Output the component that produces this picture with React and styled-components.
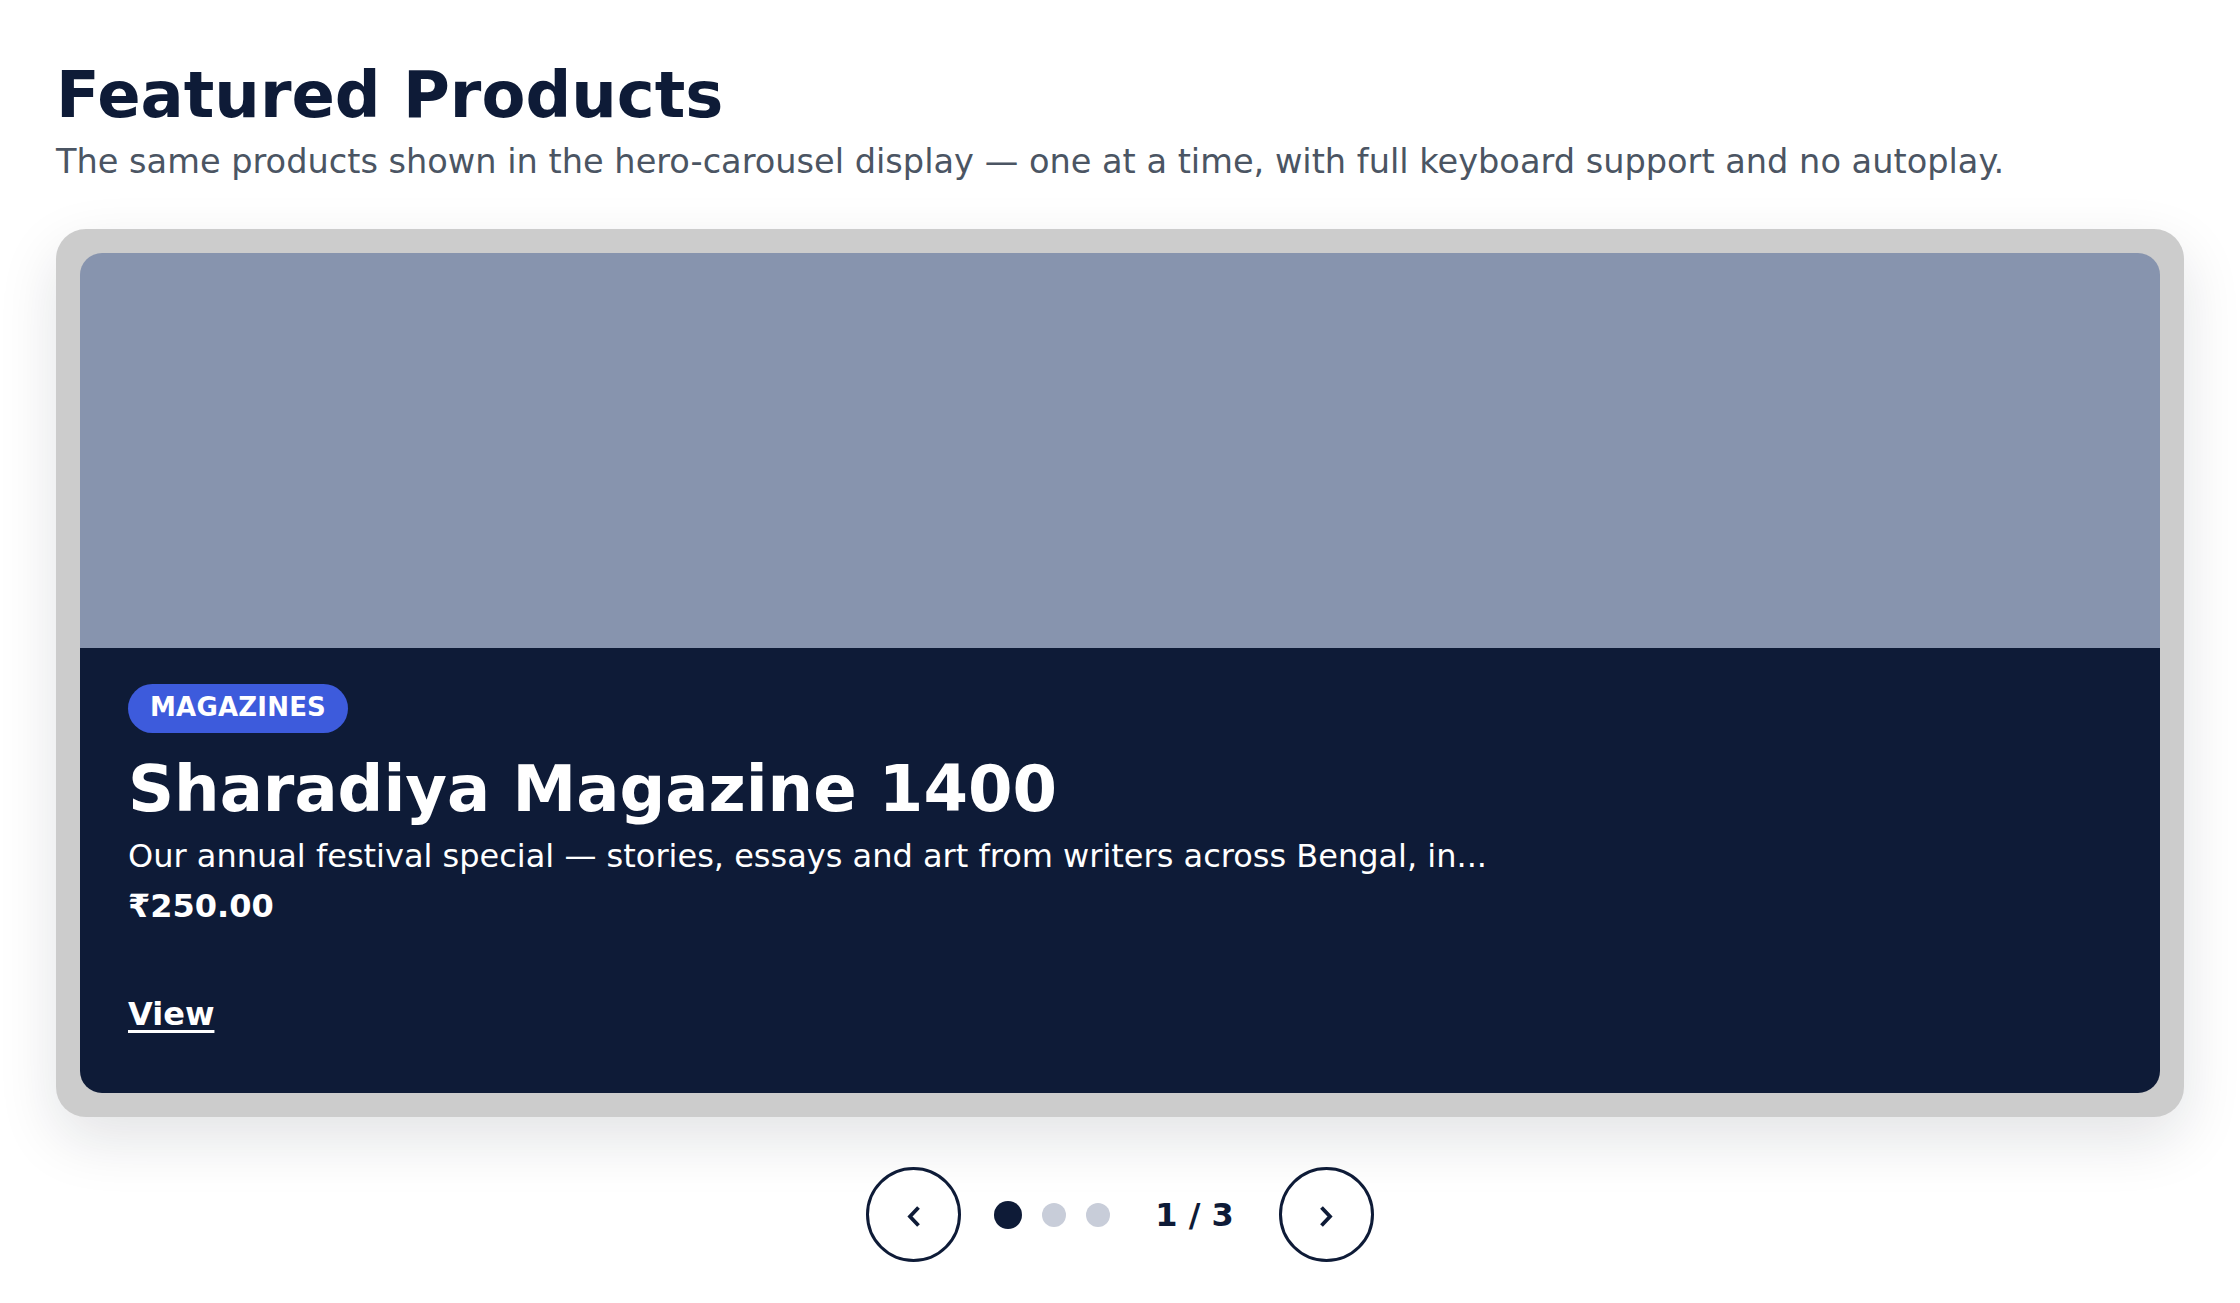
import React, { useState } from "react";
import styled, { createGlobalStyle } from "styled-components";

const GlobalStyle = createGlobalStyle`
  *, *::before, *::after { box-sizing: border-box; }
  html, body { margin: 0; padding: 0; background: #ffffff; }
  body { font-family: "DejaVu Sans", "Noto Sans", sans-serif; }
`;

const NAVY = "#0e1b37";

const Page = styled.main`
  padding: 57px 56px 40px;
  color: ${NAVY};
`;

const Heading = styled.h1`
  margin: 0;
  font-size: 64px;
  line-height: 76.8px;
  font-weight: 700;
  color: ${NAVY};
`;

const Lead = styled.p`
  margin: 3px 0 0;
  font-size: 33.6px;
  line-height: 50.4px;
  color: #4b5563;
`;

const Frame = styled.section`
  margin-top: 42px;
  padding: 24px;
  background: #cccccc;
  border-radius: 30px;
  box-shadow: 0 22px 60px rgba(15, 23, 42, 0.12);
`;

const Slide = styled.article`
  display: flex;
  flex-direction: column;
  border-radius: 22px;
  overflow: hidden;
`;

const Media = styled.div`
  height: 395px;
  background: #8794ae;
`;

const Body = styled.div`
  display: flex;
  flex-direction: column;
  align-items: flex-start;
  padding: 36px 48px 55px;
  background: ${NAVY};
  color: #ffffff;
`;

const Badge = styled.span`
  display: inline-block;
  padding: 8px 22px 11px;
  border-radius: 999px;
  background: #3d5bdc;
  color: #ffffff;
  font-size: 26px;
  line-height: 30px;
  font-weight: 700;
  letter-spacing: 0.2px;
`;

const SlideTitle = styled.h2`
  margin: 18px 0 0;
  font-size: 64px;
  line-height: 76.8px;
  font-weight: 700;
`;

const Text = styled.p`
  margin: ${(p) => p.$mt || 0}px 0 0;
  font-size: 32px;
  line-height: 48px;
  font-weight: ${(p) => (p.$bold ? 700 : 400)};
`;

const ViewLink = styled.a`
  margin-top: 60px;
  font-size: 32px;
  line-height: 48px;
  font-weight: 700;
  color: #ffffff;
  text-decoration: underline;
  text-decoration-thickness: 3px;
  text-underline-offset: 5px;
`;

const Controls = styled.nav`
  display: flex;
  justify-content: center;
  align-items: center;
  gap: 33px;
  margin-top: 50px;
`;

const NavButton = styled.button`
  display: flex;
  align-items: center;
  justify-content: center;
  width: 95px;
  height: 95px;
  padding: 0;
  border: 3px solid ${NAVY};
  border-radius: 50%;
  background: #ffffff;
  color: ${NAVY};
  cursor: pointer;

  svg { margin-top: 3px; }
`;

const Dots = styled.div`
  display: flex;
  align-items: center;
  gap: 20px;
`;

const Dot = styled.button`
  width: ${(p) => (p.$active ? 28 : 24)}px;
  height: ${(p) => (p.$active ? 28 : 24)}px;
  padding: 0;
  border: none;
  border-radius: 50%;
  background: ${(p) => (p.$active ? NAVY : "#c8cdd9")};
  cursor: pointer;
`;

const Counter = styled.span`
  margin: 0 12px;
  font-size: 32px;
  line-height: 48px;
  font-weight: 700;
  color: ${NAVY};
`;

const Chevron = ({ dir }) => (
  <svg width="14" height="21" viewBox="0 0 14 21" aria-hidden="true">
    <path
      d={dir === "left" ? "M11.5 1.5 L3 10.5 L11.5 19.5" : "M2.5 1.5 L11 10.5 L2.5 19.5"}
      fill="none"
      stroke="currentColor"
      strokeWidth="3.8"
    />
  </svg>
);

const products = [
  {
    category: "MAGAZINES",
    title: "Sharadiya Magazine 1400",
    desc: "Our annual festival special — stories, essays and art from writers across Bengal, in...",
    price: "₹250.00",
  },
  {
    category: "BOOKS",
    title: "Collected Poems",
    desc: "A new edition of classic verse.",
    price: "₹400.00",
  },
  {
    category: "PRINTS",
    title: "Festival Poster",
    desc: "Limited art print.",
    price: "₹150.00",
  },
];

export default function App() {
  const [index, setIndex] = useState(0);
  const p = products[index];
  const n = products.length;
  return (
    <>
      <GlobalStyle />
      <Page>
        <Heading>Featured Products</Heading>
        <Lead>
          The same products shown in the hero-carousel display — one at a time, with full keyboard support and no autoplay.
        </Lead>
        <Frame aria-roledescription="carousel">
          <Slide>
            <Media />
            <Body>
              <Badge>{p.category}</Badge>
              <SlideTitle>{p.title}</SlideTitle>
              <Text $mt={4}>{p.desc}</Text>
              <Text $mt={2} $bold>{p.price}</Text>
              <ViewLink href="#">View</ViewLink>
            </Body>
          </Slide>
        </Frame>
        <Controls>
          <NavButton aria-label="Previous" onClick={() => setIndex((index + n - 1) % n)}>
            <Chevron dir="left" />
          </NavButton>
          <Dots>
            {products.map((_, i) => (
              <Dot key={i} $active={i === index} aria-label={`Slide ${i + 1}`} onClick={() => setIndex(i)} />
            ))}
          </Dots>
          <Counter>
            {index + 1} / {n}
          </Counter>
          <NavButton aria-label="Next" onClick={() => setIndex((index + 1) % n)}>
            <Chevron dir="right" />
          </NavButton>
        </Controls>
      </Page>
    </>
  );
}
